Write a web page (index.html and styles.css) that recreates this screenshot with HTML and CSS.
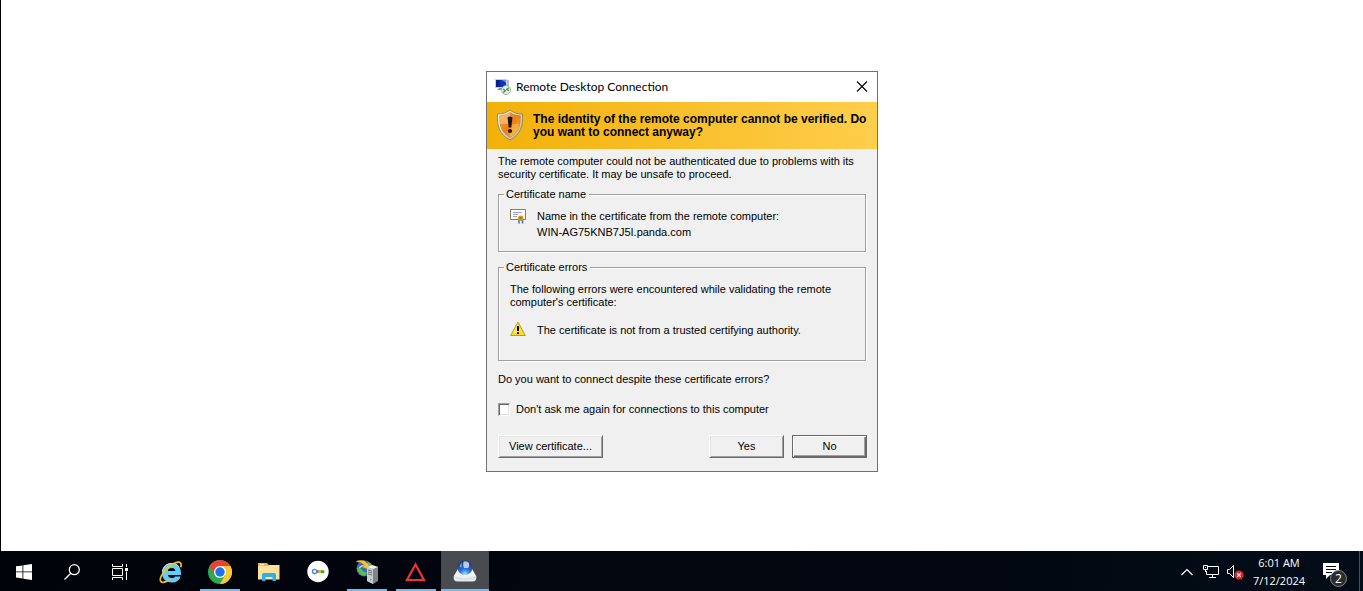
FILE: index.html
```html
<!DOCTYPE html>
<html lang="en">
<head>
<meta charset="utf-8">
<title>Remote Desktop Connection</title>
<link rel="stylesheet" href="styles.css">
</head>
<body>
<div class="screen">
  <main class="stage">
    <form class="dialog" role="dialog" aria-labelledby="dialog-title">
      <header class="titlebar">
        <svg class="title-icon" width="16" height="16" viewBox="0 0 16 16" aria-hidden="true">
          <path d="M0 0h12v9H0z" fill="#c9ced8"/>
          <path d="M1 1h10v7H1z" fill="#1233b4"/>
          <path d="M1 1h4v7H1z" fill="#0a1f8c"/>
          <path d="M7 1h4v3z" fill="#5b86ea"/>
          <path d="M12 1h2v7h-2z" fill="#b8bcc4"/>
          <path d="M4 9h4v2H2z" fill="#8d939e"/>
          <circle cx="11" cy="11" r="4.500" fill="#e9ece9" stroke="#8c9490" stroke-width=".7"/>
          <path d="M8.300 10l2 1.700-2 1.700M13.800 8.700l-2 1.500 2 1.500" fill="none" stroke="#2d9a35" stroke-width="1.300"/>
        </svg>
        <h1 class="title" id="dialog-title">Remote Desktop Connection</h1>
        <button class="close" type="button" aria-label="Close">
          <svg width="12" height="12" viewBox="0 0 12 12" aria-hidden="true"><path d="M1 .5l10 10M11 .5L1 10.500" stroke="#000" stroke-width="1.100"/></svg>
        </button>
      </header>
      <div class="banner">
        <svg class="shield" width="28" height="32" viewBox="0 0 28 32" aria-hidden="true">
          <defs>
            <linearGradient id="shield-fill" x1="0" y1="0" x2="1" y2="1"><stop offset="0" stop-color="#f9a94a"/><stop offset=".5" stop-color="#ee7d14"/><stop offset="1" stop-color="#ffb545"/></linearGradient>
            <linearGradient id="shield-rim" x1="0" y1="0" x2="1" y2="1"><stop offset="0" stop-color="#fff"/><stop offset="1" stop-color="#bdb8a8"/></linearGradient>
          </defs>
          <path d="M14 1c3 2.500 7 4 12.500 4C27 17 25 25 14 31 3 25 1 17 1.500 5 7 5 11 3.500 14 1z" fill="url(#shield-rim)" stroke="#8a7440" stroke-width=".8"/>
          <path d="M14 3.500c3 2 6 3.200 10.300 3.300C24.500 17 22.500 23.500 14 28.500 5.500 23.500 3.500 17 3.700 6.800 8 6.700 11 5.500 14 3.500z" fill="url(#shield-fill)" stroke="#b8741e" stroke-width=".6"/>
          <path d="M3.700 15C3.600 12 3.600 9 3.700 6.800 8 6.700 11 5.500 14 3.500V15z" fill="#ffe0ae" opacity=".4"/>
          <path d="M14 15h9.700C22.500 21 20 25 14 28.500z" fill="#ffd052" opacity=".4"/>
          <path d="M11.500 8.500q2.500-2 5 0L15.300 18.500h-2.600z" fill="#1c1710"/>
          <circle cx="14" cy="22" r="2.100" fill="#1c1710"/>
        </svg>
        <p class="banner-text">The identity of the remote computer cannot be verified. Do you want to connect anyway?</p>
      </div>
      <div class="content">
        <p class="intro">The remote computer could not be authenticated due to problems with its security certificate. It may be unsafe to proceed.</p>
        <fieldset class="group group-name">
          <legend>Certificate name</legend>
          <div class="entry">
            <svg class="entry-icon" width="16" height="16" viewBox="0 0 16 16" aria-hidden="true">
              <path d="M.5 1.500h15v10H.5z" fill="#fff" stroke="#8b7b5c"/>
              <path d="M3 4.500h9M3 6.500h5M3 8.500h4" stroke="#9aa2cc"/>
              <path d="M9 11.500V15.500M12.500 11.500V15.500" stroke="#2f6fe0" stroke-width="1.500"/>
              <circle cx="10.700" cy="10.300" r="2.800" fill="#d99a10"/>
              <circle cx="10.500" cy="10" r="1.100" fill="#a86a08"/>
            </svg>
            <p class="cert">Name in the certificate from the remote computer:<br>WIN-AG75KNB7J5I.panda.com</p>
          </div>
        </fieldset>
        <fieldset class="group group-errors">
          <legend>Certificate errors</legend>
          <p class="lead">The following errors were encountered while validating the remote computer's certificate:</p>
          <div class="entry">
            <svg class="entry-icon" width="16" height="16" viewBox="0 0 16 16" aria-hidden="true">
              <path d="M8 1L15.300 14.500H.7z" fill="#ffdc2b" stroke="#c19a14" stroke-linejoin="round"/>
              <path d="M8 2.500L3 12h5z" fill="#fff07a" opacity=".6"/>
              <path d="M7 5h2v5H7zM7 11.300h2v1.700H7z" fill="#000"/>
            </svg>
            <p class="error">The certificate is not from a trusted certifying authority.</p>
          </div>
        </fieldset>
        <p class="question">Do you want to connect despite these certificate errors?</p>
        <label class="remember"><input class="check" type="checkbox">Don't ask me again for connections to this computer</label>
        <div class="actions">
          <button class="btn btn-view" type="button">View certificate...</button>
          <button class="btn" type="button">Yes</button>
          <button class="btn btn-default" type="button">No</button>
        </div>
      </div>
    </form>
  </main>

  <nav class="taskbar" aria-label="Taskbar">
    <div class="system">
      <button class="task" type="button" aria-label="Start">
        <svg width="16" height="16" viewBox="0 0 16 16" aria-hidden="true"><path d="M0 2.300l6.500-.9v6.100H0zM7.300 1.300L16 0v7.500H7.300zM0 8.300h6.500v6.200L0 13.600zM7.300 8.300H16V16l-8.700-1.300z" fill="#fff"/></svg>
      </button>
      <button class="task" type="button" aria-label="Search">
        <svg width="16" height="16" viewBox="0 0 16 16" fill="none" stroke="#fff" stroke-width="1.300" aria-hidden="true"><circle cx="10.300" cy="5.700" r="5"/><path d="M6.800 9.200L.5 15.500"/></svg>
      </button>
      <button class="task" type="button" aria-label="Task View">
        <svg width="16" height="16" viewBox="0 0 16 16" aria-hidden="true"><path d="M.5 0v2.500h10V0M.5 4.500h10v7H.5zM.5 16v-2.500h10V16M14.500 0v3M14.500 7.500V16" fill="none" stroke="#fff"/><path d="M13 4h3v3h-3z" fill="#fff"/></svg>
      </button>
    </div>
    <div class="apps">
      <button class="task" type="button" aria-label="Internet Explorer">
        <svg width="24" height="24" viewBox="0 0 24 24" aria-hidden="true">
          <path d="M22 15H8.900c.3 1.900 1.800 3 3.900 3 1.600 0 2.700-.5 3.300-1.500h5.500C20.300 20.500 17 22.500 12.800 22.500 7 22.500 3 18.700 3 13S7 3 12.800 3c5.900 0 9.700 4.300 9.200 12zM8.900 11h7.500c-.2-1.900-1.600-3-3.700-3s-3.600 1.100-3.800 3z" fill="#62cdf8"/>
          <path d="M3.500 12C4 6.500 7.700 3.500 12.800 3.500c2.800 0 5.100 1 6.700 2.800" fill="none" stroke="#b2eaff"/>
          <path d="M21.700 7.200c1-3.300.2-5.200-2.500-5C13.500 2.600 4.500 10.500 2 16.500.5 20.500 1.500 23 5 22.200c1.500-.3 3.200-1.200 4.500-2" fill="none" stroke="#f5bf23" stroke-width="1.700"/>
        </svg>
      </button>
      <button class="task running" type="button" aria-label="Google Chrome">
        <svg width="24" height="24" viewBox="0 0 24 24" aria-hidden="true">
          <circle cx="12" cy="12" r="12" fill="#2da94f"/>
          <path d="M12 6h10.400A12 12 0 0 1 12 24l5.200-9z" fill="#fcc934"/>
          <path d="M12 0A12 12 0 0 1 22.400 6H12L6.800 15 1.600 6A12 12 0 0 1 12 0z" fill="#ea4335"/>
          <circle cx="12" cy="12" r="6" fill="#fff"/><circle cx="12" cy="12" r="4.700" fill="#1a73e8"/>
        </svg>
      </button>
      <button class="task" type="button" aria-label="File Explorer">
        <svg width="24" height="24" viewBox="0 0 24 24" aria-hidden="true">
          <path d="M1 3h9l1.500 2H22v14H1z" fill="#f4b92e"/><path d="M3 4.200h4v1H3z" fill="#fff"/>
          <path d="M1 6h10l1-1h10.500v14.500H1z" fill="#fde29b"/>
          <path d="M5 21v-6.500q0-1.500 1.500-1.500h11q1.500 0 1.500 1.500V21h-3.500v-4h-7v4z" fill="#35abe6"/>
        </svg>
      </button>
      <button class="task" type="button" aria-label="Password manager">
        <svg width="24" height="24" viewBox="0 0 24 24" aria-hidden="true">
          <circle cx="12" cy="11.500" r="10.700" fill="#fff"/>
          <path d="M9.500 10.200h4v2.600h-4z" fill="#ea4335"/><path d="M12.500 10.200h3v2.600h-3z" fill="#fbbc05"/><path d="M14.800 10.200h3.500v3h-3.500z" fill="#34a853"/>
          <circle cx="8.600" cy="11.500" r="2.100" fill="#fff" stroke="#4285f4" stroke-width="1.400"/>
        </svg>
      </button>
      <button class="task running" type="button" aria-label="IIS Manager">
        <svg width="24" height="24" viewBox="0 0 24 24" aria-hidden="true">
          <circle cx="9.500" cy="8.500" r="8" fill="#2d6fc9"/>
          <path d="M2 8q3-1 5 2t5 2l-2 4Q3 15 2 8zM10 3l6 0 1.500 5-4 1z" fill="#63b947"/>
          <path d="M4 8q3-3 7-2" fill="none" stroke="#a9dcff" stroke-width="1.300"/>
          <path d="M1 2l2-1.500q7-1.500 9 3l2-1-1 6.500-6-2 2.500-1.200Q7 1.500 1 2z" fill="#f9c22e" stroke="#bd7d11" stroke-width=".4"/>
          <path d="M12 7l5-2 6 2v14l-5 3-6-3z" fill="#7f8589"/><path d="M12 7l6 2v15l-6-3z" fill="#c9cdcf"/><path d="M12 7l5-2 6 2-5 2z" fill="#f0f2f2"/>
          <path d="M13 10l4 1M13 12l4 1M13 14l4 1" stroke="#6b7175"/><path d="M15 19h1.500v1.500H15z" fill="#4abe43"/>
        </svg>
      </button>
      <button class="task running" type="button" aria-label="Triangle">
        <svg width="24" height="24" viewBox="0 0 24 24" aria-hidden="true"><path d="M11.500 4.500l8.500 15.500H3z" fill="none" stroke="#ee3338" stroke-width="2.200"/></svg>
      </button>
      <button class="task running active" type="button" aria-label="Remote connection">
        <svg width="24" height="24" viewBox="0 0 24 24" aria-hidden="true">
          <defs><radialGradient id="orb" cx=".5" cy=".95" r=".95"><stop offset="0" stop-color="#a8e2ff"/><stop offset=".4" stop-color="#2a6fd8"/><stop offset="1" stop-color="#0f2c78"/></radialGradient>
          <linearGradient id="base" x1="0" y1="0" x2="0" y2="1"><stop offset="0" stop-color="#fff"/><stop offset="1" stop-color="#e2e5e8"/></linearGradient></defs>
          <path d="M5 9h14l4.200 7q1 5.500-3.500 5.500H4.300Q-.2 21.500.8 16z" fill="url(#base)"/>
          <path d="M1 17q11 4 22 0" fill="none" stroke="#c5ccd2" stroke-width=".6"/>
          <circle cx="12" cy="7.800" r="7.300" fill="url(#orb)"/>
          <path d="M10.500 1.500q4-.8 5.500 1.500 1 3-1 5h-4q-1.500-3-.5-6.500z" fill="#e8f4ff" opacity=".75"/>
          <path d="M8.800 2.300q-2 1.500-2 4.700l1.700.5z" fill="#fff" opacity=".5"/>
        </svg>
      </button>
    </div>
    <div class="tray">
      <button class="tray-btn" type="button" aria-label="Show hidden icons">
        <svg width="12" height="8" viewBox="0 0 12 8" aria-hidden="true"><path d="M.5 7L6 1.500 11.500 7" fill="none" stroke="#fff" stroke-width="1.200"/></svg>
      </button>
      <button class="tray-btn" type="button" aria-label="Network">
        <svg width="16" height="14" viewBox="0 0 16 14" fill="none" stroke="#fff" aria-hidden="true"><path d="M5 1.500h10.500v8H3.500V6M9.500 9.500v3M6 12.500h7"/><path d="M.5.500h4v4h-4zM2.500 4.500V7"/><path d="M2 2.500h1"/></svg>
      </button>
      <button class="tray-btn" type="button" aria-label="Volume muted">
        <svg width="18" height="16" viewBox="0 0 18 16" aria-hidden="true"><path d="M1.500 5.500h2l4-4v12l-4-4h-2z" fill="none" stroke="#fff"/><circle cx="13" cy="11" r="4.500" fill="#e5202e"/><path d="M11.200 9.200l3.600 3.600M14.800 9.200l-3.600 3.600" stroke="#fff" stroke-width="1.200"/></svg>
      </button>
      <button class="clock" type="button"><span>6:01 AM</span><span>7/12/2024</span></button>
      <button class="notify" type="button" aria-label="2 notifications">
        <svg width="18" height="18" viewBox="0 0 18 18" aria-hidden="true"><path d="M1 1h16v12H8l-4 4v-4H1z" fill="#fff"/><path d="M4 4.500h10M4 7.500h10M4 10.500h6" stroke="#05090f"/></svg>
        <span class="badge">2</span>
      </button>
      <button class="show-desktop" type="button" aria-label="Show desktop"></button>
    </div>
  </nav>
</div>
</body>
</html>
```
FILE: styles.css
```css
* { box-sizing: border-box; }

body {
  margin: 0;
  font-family: "Liberation Sans", Arial, sans-serif;
  font-size: 11px;
  line-height: 13px;
  color: #000;
  background: #fff;
}

h1, p { margin: 0; }

button {
  margin: 0;
  padding: 0;
  border: 0;
  background: none;
  font: inherit;
  color: inherit;
}

svg { display: block; flex: none; }

.screen {
  display: flex;
  flex-direction: column;
  min-height: 100vh;
}

.stage {
  flex: 1;
  display: flex;
  align-items: center;
  justify-content: center;
  padding-bottom: 8px;
  border-left: 1px solid #000;
}

.dialog {
  width: 392px;
  border: 1px solid #6f7173;
  background: #f0f0f0;
}

.titlebar {
  display: flex;
  align-items: center;
  gap: 5px;
  height: 30px;
  padding: 0 8px;
  background: #fff;
}

.title {
  flex: 1;
  font: 12px/16px Lato, "Open Sans", sans-serif;
}

.close {
  display: grid;
  place-items: center;
  width: 14px;
  height: 14px;
}

.banner {
  display: flex;
  align-items: center;
  gap: 9px;
  padding: 7px 8px 8px 9px;
  background: linear-gradient(90deg, #f2b10a, #ffce4b);
}

.banner-text {
  padding-top: 2px;
  font-size: 12px;
  font-weight: bold;
}

.content { padding: 6px 10px 13px 11px; }

.group {
  min-width: 0;
  margin: 0 1px 0 0;
  padding: 0 11px;
  border: 1px solid #a0a0a0;
  box-shadow: 1px 1px 0 #fff, inset 1px 1px 0 #fff;
}

.group legend {
  margin-left: -6px;
  padding: 0 3px 0 2px;
  background: #f0f0f0;
}

.group-name { margin-top: 7px; padding-bottom: 11px; }
.group-errors { margin-top: 9px; padding-bottom: 21px; }

.entry { display: flex; gap: 11px; }
.group-name .entry { padding-top: 7px; }
.group-errors .entry { padding-top: 12px; }

.cert { line-height: 16px; }
.error { line-height: 18px; }
.lead { padding-top: 9px; }

.question { margin-top: 12px; }

.remember {
  display: flex;
  align-items: center;
  gap: 6px;
  margin-top: 17px;
}

.check {
  appearance: none;
  width: 12px;
  height: 13px;
  margin: 0;
  border: 1px solid;
  border-color: #a0a0a0 #fff #fff #a0a0a0;
  background: #fff;
  box-shadow: inset 1px 1px 0 #696969, inset -1px -1px 0 #e3e3e3;
}

.actions {
  display: flex;
  gap: 8px;
  margin-top: 19px;
}

.btn {
  width: 75px;
  height: 23px;
  border: 1px solid;
  border-color: #fff #696969 #696969 #fff;
  background: #f0f0f0;
  box-shadow: inset 1px 1px 0 #e3e3e3, inset -1px -1px 0 #a0a0a0;
}

.btn-view { width: 105px; margin-right: auto; }

.btn-default {
  border-color: #696969;
  box-shadow: inset 1px 1px 0 #fff, inset -1px -1px 0 #696969, inset -2px -2px 0 #a0a0a0;
}

.taskbar {
  display: flex;
  height: 40px;
  background: linear-gradient(90deg, #01030a, #020711 70%, #030d17);
  color: #fff;
}

.system { display: flex; }

.apps {
  display: flex;
  gap: 1px;
  margin-left: 3px;
}

.task {
  display: grid;
  place-items: center;
  width: 48px;
  height: 40px;
  padding-top: 2px;
}

.running {
  background: linear-gradient(#76b9ed, #76b9ed) center bottom / 40px 2px no-repeat;
}

.active {
  background-color: #484b50;
  background-size: 48px 2px;
}

.tray {
  display: flex;
  align-items: center;
  margin-left: auto;
}

.tray-btn {
  display: grid;
  place-items: center;
  width: 24px;
  height: 40px;
  padding-top: 2px;
}

.clock {
  display: flex;
  flex-direction: column;
  align-items: center;
  width: 64px;
  padding-top: 2px;
  font: 11px/18px "Open Sans", "Noto Sans", sans-serif;
}

.notify {
  position: relative;
  display: grid;
  place-items: center;
  width: 40px;
  height: 40px;
}

.badge {
  position: absolute;
  right: 4px;
  bottom: 4px;
  width: 17px;
  height: 17px;
  border: 1px solid #85888b;
  border-radius: 50%;
  background: #292d31;
  font: 12px/15px "Open Sans", "Noto Sans", sans-serif;
  text-align: center;
}

.show-desktop {
  width: 4px;
  height: 40px;
  margin-left: 8px;
  border-left: 1px solid #4b5158;
}
```
